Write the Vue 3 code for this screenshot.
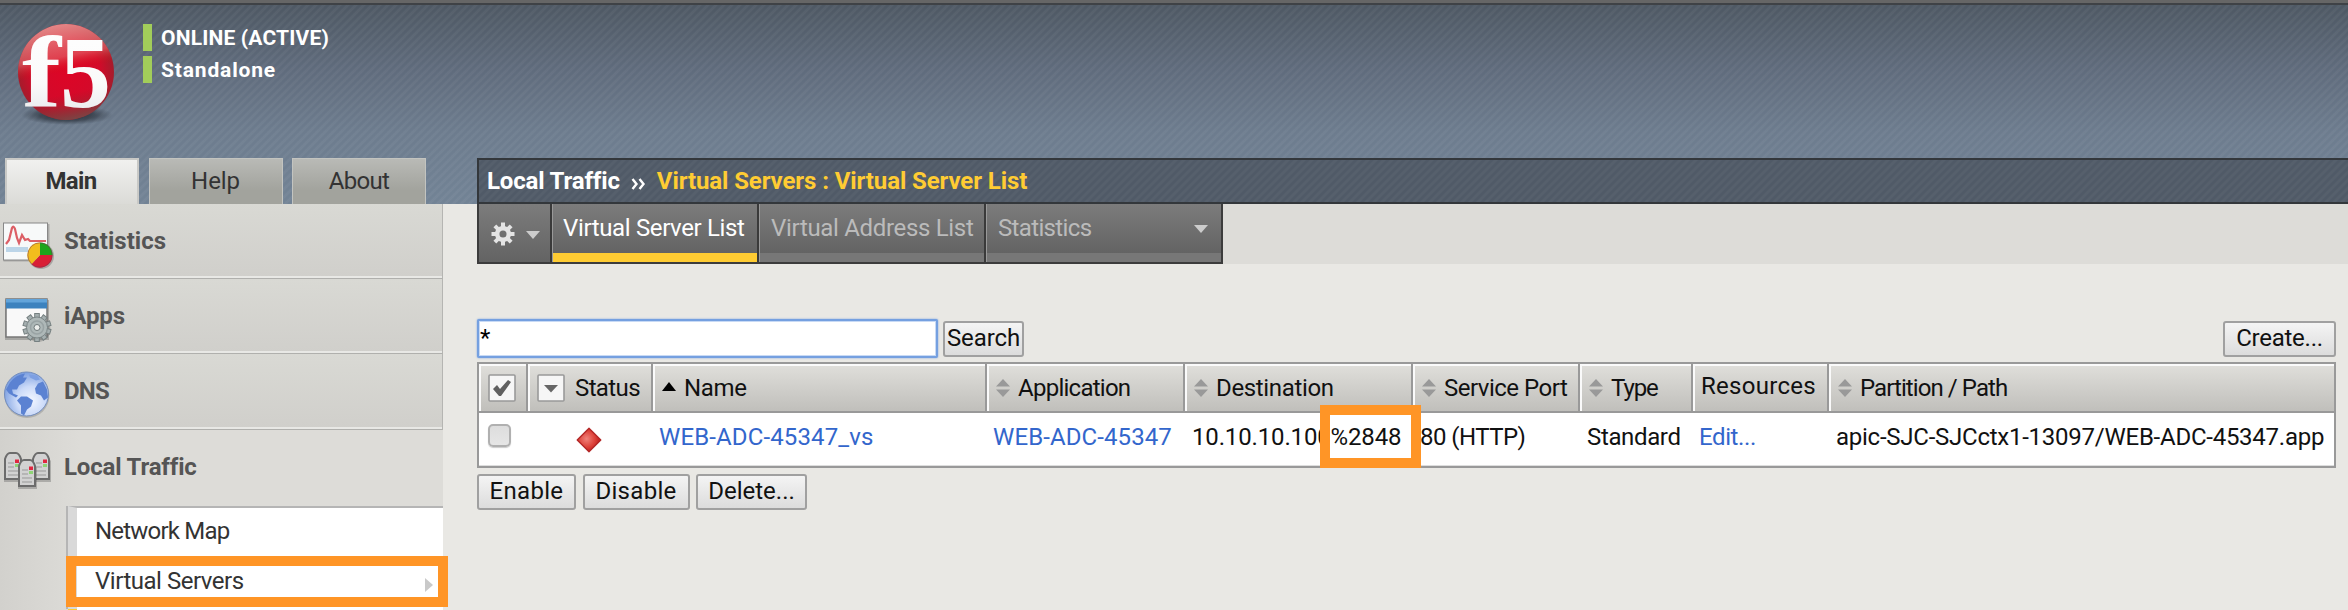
<script setup>
// Letter spacing is tuned per label so every string keeps its intended width.
const sideTabs = [
  { label: 'Main', ls: -0.67, active: true },
  { label: 'Help', ls: -0.1 },
  { label: 'About', ls: -0.7 }
]
const modules = [
  { label: 'Statistics', ls: 0.02, icon: 'stats' },
  { label: 'iApps', ls: -0.08, icon: 'iapps' },
  { label: 'DNS', ls: -0.77, icon: 'dns' },
  { label: 'Local Traffic', ls: -0.17, icon: 'ltm', open: true }
]
const columns = [
  { label: 'Name', ls: -0.3, icon: 'asc' },
  { label: 'Application', ls: -0.74, icon: 'sort' },
  { label: 'Destination', ls: -0.34, icon: 'sort' },
  { label: 'Service Port', ls: -0.5, icon: 'sort' },
  { label: 'Type', ls: -1.1, icon: 'sort' },
  { label: 'Resources', ls: 0.28 },
  { label: 'Partition / Path', ls: -0.92, icon: 'sort' }
]
const cells = [
  { text: 'WEB-ADC-45347_vs', ls: 0.13, link: true },
  { text: 'WEB-ADC-45347', ls: 0.1, link: true },
  { text: '10.10.10.100%2848', ls: -0.15 },
  { text: '80 (HTTP)', ls: -0.55 },
  { text: 'Standard', ls: -0.36 },
  { text: 'Edit...', ls: -0.4, link: true },
  { text: 'apic-SJC-SJCctx1-13097/WEB-ADC-45347.app', ls: -0.25 }
]
const actions = [
  { label: 'Enable', ls: 0.3, w: 99 },
  { label: 'Disable', ls: 0.3, w: 107 },
  { label: 'Delete...', ls: 0, w: 111 }
]
const teeth = [0, 45, 90, 135, 180, 225, 270, 315]
const smallTeeth = [0, 36, 72, 108, 144, 180, 216, 252, 288, 324]
const track = (v) => ({ letterSpacing: v + 'px' })
</script>

<template>
  <div class="page">
    <div class="chrome"></div>
    <header class="banner">
      <svg class="logo" width="110" height="110" viewBox="0 0 110 110">
        <defs>
          <radialGradient id="ball" cx="0.5" cy="0.5" r="0.5">
            <stop offset="0" stop-color="#dd0526" />
            <stop offset="0.7" stop-color="#d30a2a" />
            <stop offset="1" stop-color="#a51c2c" />
          </radialGradient>
          <linearGradient id="gloss" x1="0.3" y1="0" x2="0.5" y2="1">
            <stop offset="0" stop-color="#ee9a98" stop-opacity="0.9" />
            <stop offset="0.36" stop-color="#e67070" stop-opacity="0.55" />
            <stop offset="0.52" stop-color="#d00" stop-opacity="0" />
            <stop offset="0.74" stop-color="#a01c28" stop-opacity="0" />
            <stop offset="1" stop-color="#7c4444" stop-opacity="0.95" />
          </linearGradient>
          <linearGradient id="ink" x1="0" y1="0" x2="0" y2="1">
            <stop offset="0" stop-color="#fff" />
            <stop offset="0.6" stop-color="#fafafa" />
            <stop offset="1" stop-color="#e2e2e6" />
          </linearGradient>
          <radialGradient id="shade">
            <stop offset="0" stop-color="#1c222a" stop-opacity="0.95" />
            <stop offset="0.6" stop-color="#252c35" stop-opacity="0.6" />
            <stop offset="1" stop-color="#333c47" stop-opacity="0" />
          </radialGradient>
        </defs>
        <ellipse cx="55" cy="97" rx="46" ry="10" fill="url(#shade)" />
        <circle cx="54" cy="54" r="48" fill="url(#ball)" />
        <circle cx="54" cy="54" r="48" fill="url(#gloss)" />
        <g class="logo-text" fill="url(#ink)">
          <text x="10" y="89" textLength="39" lengthAdjust="spacingAndGlyphs">f</text>
          <text x="48" y="89" textLength="51" lengthAdjust="spacingAndGlyphs">5</text>
        </g>
      </svg>
      <div class="device">
        <div class="state" :style="track(0.17)">ONLINE (ACTIVE)</div>
        <div class="state" :style="track(0.84)">Standalone</div>
      </div>
    </header>

    <div class="body">
      <aside class="side">
        <nav class="side-tabs">
          <div v-for="t in sideTabs" :key="t.label" class="side-tab" :class="{ active: t.active }">
            <span :style="track(t.ls)">{{ t.label }}</span>
          </div>
        </nav>
        <div v-for="m in modules" :key="m.label" class="module" :class="[m.icon, { open: m.open }]">
          <svg v-if="m.icon === 'stats'" class="mod-icon" width="60" height="60" viewBox="0 0 60 60">
            <rect x="4.500" y="7" width="46" height="37.500" fill="#777" opacity="0.45" />
            <rect x="4.500" y="6" width="44" height="37" fill="#f7f9f9" stroke="#888" />
            <path d="M7 30h22v5H7z" fill="#bcd5e8" />
            <path d="M7 27l3-4 3-12q1.500-3 3 1l2 9 2 5 3-8 3 5 3-1 2 2h16" fill="none" stroke="#dc5f66" stroke-width="2.200" />
            <circle cx="42" cy="39" r="13" fill="#555" opacity="0.35" />
            <path d="M41 38V25.500A12.500 12.500 0 0 1 53.500 38z" fill="#1ca51c" />
            <path d="M41 38H53.500A12.500 12.500 0 0 1 32.500 47.200z" fill="#d91f36" />
            <path d="M41 38L32.500 47.200A12.500 12.500 0 0 1 41 25.500z" fill="#f2bd1d" />
            <circle cx="41" cy="38" r="12.200" fill="none" stroke="#735" stroke-width="0.800" opacity="0.6" />
          </svg>
          <svg v-else-if="m.icon === 'iapps'" class="mod-icon" width="60" height="60" viewBox="0 0 60 60">
            <rect x="6" y="8" width="44" height="40" fill="#555" opacity="0.35" />
            <rect x="7" y="7" width="41" height="38" fill="#f9f9f9" stroke="#777" stroke-width="1.500" />
            <rect x="7" y="7" width="41" height="9.500" fill="#3c82be" />
            <rect x="7" y="7" width="41" height="3.500" fill="#62a4da" />
            <g transform="translate(38 35.500)">
              <circle cx="1" cy="2" r="12.500" fill="#555" opacity="0.3" />
              <g fill="#a5afb0" stroke="#768081" stroke-width="1">
                <rect v-for="a in smallTeeth" :key="a" x="-2.300" y="-14" width="4.600" height="6" :transform="`rotate(${a})`" />
              </g>
              <circle r="10.500" fill="#aeb8b8" stroke="#7c8687" />
              <circle r="6.500" fill="none" stroke="#99a3a4" stroke-width="1.500" />
              <circle r="3" fill="#eceeec" stroke="#6f797a" />
            </g>
          </svg>
          <svg v-else-if="m.icon === 'dns'" class="mod-icon" width="60" height="60" viewBox="0 0 60 60">
            <defs>
              <radialGradient id="sea" cx="0.6" cy="0.65" r="0.65">
                <stop offset="0" stop-color="#f2f6ff" />
                <stop offset="0.5" stop-color="#cbdaf8" />
                <stop offset="1" stop-color="#7c9fe0" />
              </radialGradient>
            </defs>
            <circle cx="28" cy="28.500" r="22.500" fill="#666" opacity="0.3" />
            <circle cx="27.500" cy="27" r="22" fill="url(#sea)" stroke="#738dbd" />
            <g transform="translate(0 -1.500)">
              <path d="M11 17Q17 9 26 8l-2 4 4 0-3 5-5 3-2 4-5 0 1 4 5 2-2 2-7-4-3-4z" fill="#5b82d2" />
              <path d="M22 31l6 0 6 4-2 6-4 3-3 6-3-2 0-8-4-5z" fill="#5b82d2" />
              <path d="M39 18l5-2 4 8 1 8-4 3-3-5-5-2-1-5z" fill="#5b82d2" />
              <path d="M30 9l8 1 3 4-4 1-6-3z" fill="#7d9fe2" />
            </g>
          </svg>
          <svg v-else class="mod-icon" width="60" height="60" viewBox="0 0 60 60">
            <g v-for="(p, i) in [[5, 1], [33, 1], [19, 8]]" :key="i" :transform="`translate(${p[0]} ${p[1]})`">
              <path d="M0 8L5 2H14L19 8V29H0z" fill="#444" opacity="0.3" transform="translate(0 1)" />
              <path d="M1 7Q3 1 6 1H12Q15 1 17 7V27H1z" fill="#d2d2d2" stroke="#6c6c6c" stroke-width="2" />
              <path d="M4 11h6M4 15h6M4 19h10M4 23h10" stroke="#999" stroke-width="1" />
              <rect x="11" y="7.500" width="4" height="3.500" fill="#e02740" />
              <rect x="11" y="12" width="4" height="3" fill="#8fd476" />
            </g>
          </svg>
          <span :style="track(m.ls)">{{ m.label }}</span>
        </div>
        <div class="submenu">
          <div class="sub-item first"><span :style="track(-0.8)">Network Map</span></div>
          <div class="sub-item">
            <span :style="track(-0.48)">Virtual Servers</span>
            <svg class="sub-arrow" width="9" height="16"><path d="M0 1L8 8L0 15z" fill="#c9c9c9" /></svg>
          </div>
          <div class="sub-rest"></div>
          <div class="callout menu-callout"></div>
        </div>
      </aside>

      <main class="main">
        <div class="crumbs">
          <span :style="track(-0.16)">Local Traffic</span>
          <svg class="chev" width="16" height="12"><path d="M1.500 1L5.500 6L1.500 11M8.500 1L12.500 6L8.500 11" fill="none" stroke="#fff" stroke-width="2.400" /></svg>
          <span class="here" :style="track(-0.1)">Virtual Servers : Virtual Server List</span>
        </div>
        <div class="tabbar">
          <div class="tabs">
            <div class="tab gear">
              <svg width="24" height="24" viewBox="-12 -12 24 24">
                <g fill="#e4e4e4">
                  <rect v-for="a in teeth" :key="a" x="-2" y="-11.500" width="4" height="6" :transform="`rotate(${a})`" />
                </g>
                <circle r="5.800" fill="none" stroke="#e4e4e4" stroke-width="4.500" />
              </svg>
              <svg class="gear-caret" width="14" height="8"><path d="M0 0H14L7 8z" fill="#ccc" /></svg>
            </div>
            <div class="tab t1 current"><span :style="track(-0.36)">Virtual Server List</span></div>
            <div class="tab t2"><span :style="track(-0.32)">Virtual Address List</span></div>
            <div class="tab t3">
              <span :style="track(-0.65)">Statistics</span>
              <svg class="tab-caret" width="14" height="8"><path d="M0 0H14L7 8z" fill="#ccc" /></svg>
            </div>
          </div>
        </div>

        <div class="search-row">
          <div class="field">*</div>
          <button class="btn search"><span :style="track(-0.1)">Search</span></button>
          <button class="btn create"><span :style="track(-0.25)">Create...</span></button>
        </div>

        <div class="table">
          <div class="row head">
            <div class="th check">
              <svg width="28" height="28">
                <rect x="1" y="1" width="26" height="26" rx="1" fill="#f6f6f6" stroke="#999" stroke-width="1.600" />
                <path d="M5 15L9 11L12 15L20 6L23 8L13 22H11z" fill="#606060" />
              </svg>
            </div>
            <div class="th status">
              <svg width="28" height="28">
                <rect x="1" y="1" width="26" height="26" rx="1" fill="#f6f6f6" stroke="#999" stroke-width="1.600" />
                <path d="M7 11H21L14 18.500z" fill="#666" />
              </svg>
              <span :style="track(-0.62)">Status</span>
            </div>
            <div v-for="c in columns" :key="c.label" class="th" :class="{ bare: !c.icon }">
              <svg v-if="c.icon === 'asc'" width="14" height="18"><path d="M7 3L14 12H0z" fill="#000" /></svg>
              <svg v-else-if="c.icon" width="14" height="18"><path d="M7 0L14 7.500H0zM7 18L0 10.500H14z" fill="#999" /></svg>
              <span :style="track(c.ls)">{{ c.label }}</span>
            </div>
          </div>
          <div class="row data">
            <div class="td pick"><i class="box"></i></div>
            <div class="td health">
              <svg width="26" height="26">
                <defs>
                  <radialGradient id="gem" cx="0.4" cy="0.45" r="0.6">
                    <stop offset="0" stop-color="#f0827a" />
                    <stop offset="0.6" stop-color="#dc4038" />
                    <stop offset="1" stop-color="#b81a1a" />
                  </radialGradient>
                </defs>
                <path d="M13 1.200L24.800 13L13 24.800L1.200 13z" fill="url(#gem)" stroke="#b22626" stroke-width="1.300" stroke-linejoin="round" />
              </svg>
            </div>
            <div v-for="c in cells" :key="c.text" class="td" :class="{ link: c.link }">
              <span :style="track(c.ls)">{{ c.text }}</span>
            </div>
          </div>
          <div class="callout cell-callout"></div>
        </div>

        <div class="actions">
          <button v-for="a in actions" :key="a.label" class="btn" :style="{ width: a.w + 'px' }">
            <span :style="track(a.ls)">{{ a.label }}</span>
          </button>
        </div>
      </main>
    </div>
  </div>
</template>

<style>
body { margin: 0; background: #e9e8e4; overflow: hidden; }
</style>

<style scoped>
.page {
  width: 2348px;
  height: 610px;
  overflow: hidden;
  font: 24px/28px Roboto, "Liberation Sans", sans-serif;
  color: #111;
  white-space: nowrap;
  background:
    repeating-linear-gradient(135deg, rgba(255, 255, 255, 0.045) 0 1.500px, rgba(255, 255, 255, 0) 2.800px 4.300px, rgba(255, 255, 255, 0.045) 5.657px) 0 0 / 100% 204px no-repeat,
    linear-gradient(#4d5762, #606c7d 35%, #6d7c8e 65%, #728395) 0 0 / 100% 204px no-repeat,
    #e9e8e4;
}
.page, .page * { box-sizing: border-box; }
.page svg { display: block; flex: none; }
.chrome { height: 5px; background: #666; border-bottom: 2px solid #3f4246; }
.banner { height: 153px; display: flex; padding: 13px 0 0 12px; }
.logo { overflow: visible; }
.logo-text { font: bold 102px "Liberation Serif", serif; }
.device { margin: 6px 0 0 21px; display: flex; flex-direction: column; gap: 5px; }
.state { height: 27px; border-left: 9px solid #a2cd5a; padding-left: 9px; font: bold 21px/28px Roboto, sans-serif; color: #fff; }
.body { display: flex; }

.side { width: 443px; height: 452px; display: flex; flex-direction: column; }
.side-tabs { flex: none; height: 46px; padding-left: 5px; display: flex; gap: 9.500px; }
.side-tab { width: 134px; height: 46px; padding-top: 8px; text-align: center; color: #333; border: 1px solid #c3c4c0; border-bottom: 0; background: linear-gradient(#b9bab6, #a2a39d 70%); }
.side-tab.active { font-weight: bold; border: 2px solid #c9c9c6; border-bottom: 0; padding: 7px 2px 0 0; background: linear-gradient(#f1f1ef, #dbdbd7); }
.module {
  flex: none; height: 75.500px; display: flex; align-items: flex-start; font-weight: bold; color: #555;
  background: linear-gradient(#d9d9d4, #d0cfcb);
  border-right: 1px solid #b5b5b2; border-bottom: 1px solid #b0b0ad; box-shadow: inset 0 -2px #e8e8e5;
}
.module.stats { height: 74.500px; }
.module span { padding-top: 23px; }
.module .mod-icon { margin: 13px 5px 0 -1px; }
.module.open { height: 76.500px; border: 0; box-shadow: none; background: linear-gradient(90deg, #d2d1cd, #dddcd8 80px); }
.module.open .mod-icon { margin-top: 21px; }
.submenu { flex: none; height: 104px; position: relative; padding-left: 66px; background: linear-gradient(90deg, #d2d1cd, #dddcd8 80px); }
.sub-item { display: flex; justify-content: space-between; height: 51px; padding: 9px 9px 0 18px; background: #fff; border-left: 9px solid #d9d9d9; color: #333; box-shadow: -2px 0 #b5b5b5; margin-left: 2px; }
.sub-item.first { height: 52px; border-top: 2px solid #b5b5b5; }
.sub-arrow { margin-top: 10px; }
.sub-rest { height: 10px; background: #fff; border-left: 9px solid #ffcc33; margin-left: 2px; }
.callout { position: absolute; border: 10px solid #ff9526; }
.menu-callout { left: 66px; top: 50px; width: 382px; height: 51px; }

.main { flex: 1; padding-left: 34px; }
.crumbs {
  height: 46px; border: 2px solid #33373b; border-right: 0; display: flex; align-items: flex-start; padding: 7px 0 0 8px; font-weight: bold; color: #fff;
  background:
    repeating-linear-gradient(135deg, rgba(255, 255, 255, 0.035) 0 1.500px, rgba(255, 255, 255, 0) 2.800px 4.300px, rgba(255, 255, 255, 0.035) 5.657px),
    #505a67;
}
.chev { margin: 11px 0 0 11px; }
.here { color: #fc3; margin-left: 10px; }
.tabbar { height: 60px; background: #dddcd8; }
.tabs { display: flex; width: 746px; height: 60px; background: #666; border: 2px solid #3c3c3c; border-top: 0; }
.tab { height: 58px; padding: 10px 0 0 12px; color: #bbb; border-left: 2px solid #3a3a3a; background: linear-gradient(#7c7c7c, #636363 49px, #777 49px); box-shadow: inset 1px 0 #999; display: flex; align-items: flex-start; }
.tab.gear { width: 71px; border-left: 0; padding: 18px 0 0 12px; background: linear-gradient(#7c7c7c, #636363); box-shadow: none; }
.gear-caret { margin: 9px 0 0 11px; }
.tab.t1 { width: 207px; padding-left: 11px; }
.tab.current { color: #fff; background: linear-gradient(#7c7c7c, #636363 49px, #fc3 49px); }
.tab.t2 { width: 227px; }
.tab.t3 { width: 237px; justify-content: space-between; padding-right: 13px; }
.tab-caret { margin-top: 11px; }

.search-row { margin-top: 55px; height: 43px; display: flex; align-items: flex-start; width: 1859px; }
.field { width: 461px; height: 39px; background: #fff; border: 2px solid #75a0e0; box-shadow: inset 0 0 0 1px #c8daf5, 0 0 2px #75a0e0; border-radius: 2px; padding: 3px 0 0 1px; color: #000; }
.btn { margin: 0; padding: 0 0 2px; height: 36px; font: inherit; color: #111; border: 2px solid #a0a0a0; border-radius: 3px; background: linear-gradient(#f4f4f4, #dcdcdc); }
.search { width: 81px; margin: 2px 0 0 5px; }
.create { width: 113px; margin: 2px 0 0 auto; }

.table { position: relative; width: 1859px; height: 106px; border: 2px solid #999; background: #fff; box-shadow: inset 0 -1px #ddd; }
.row { display: grid; grid-template-columns: 47px 125px 334px 198px 228px 167px 113px 136px 507px; }
.head { height: 49px; border-bottom: 2px solid #999; background: linear-gradient(#e0dfdb, #c0bfbb); }
.th { display: flex; align-items: flex-start; border-left: 2px solid #999; box-shadow: inset 2px 2px #fafafa; padding: 10px 0 0 9px; }
.th svg { margin: 5px 8px 0 0; }
.th.bare { padding: 8px 0 0 8px; }
.th.check { border-left: 0; padding-left: 9px; }
.th.check svg, .th.status svg { margin-top: 0; }
.th.status svg { margin-right: 10px; }
.td { padding: 10px 0 0 9px; }
.td.link { padding-left: 8px; color: #3366cc; }
.td.pick { padding: 11px 0 0 9px; }
.box { display: block; width: 23px; height: 23px; border: 2px solid #b0b0b0; border-radius: 5px; background: linear-gradient(#ddd, #e6e6e6); box-shadow: 0 1px 1px #ccc; }
.td.health { padding: 14px 0 0 50px; }
.cell-callout { left: 841px; top: 41px; width: 101px; height: 63px; }
.actions { display: flex; gap: 6.500px; margin-top: 6px; }
</style>
